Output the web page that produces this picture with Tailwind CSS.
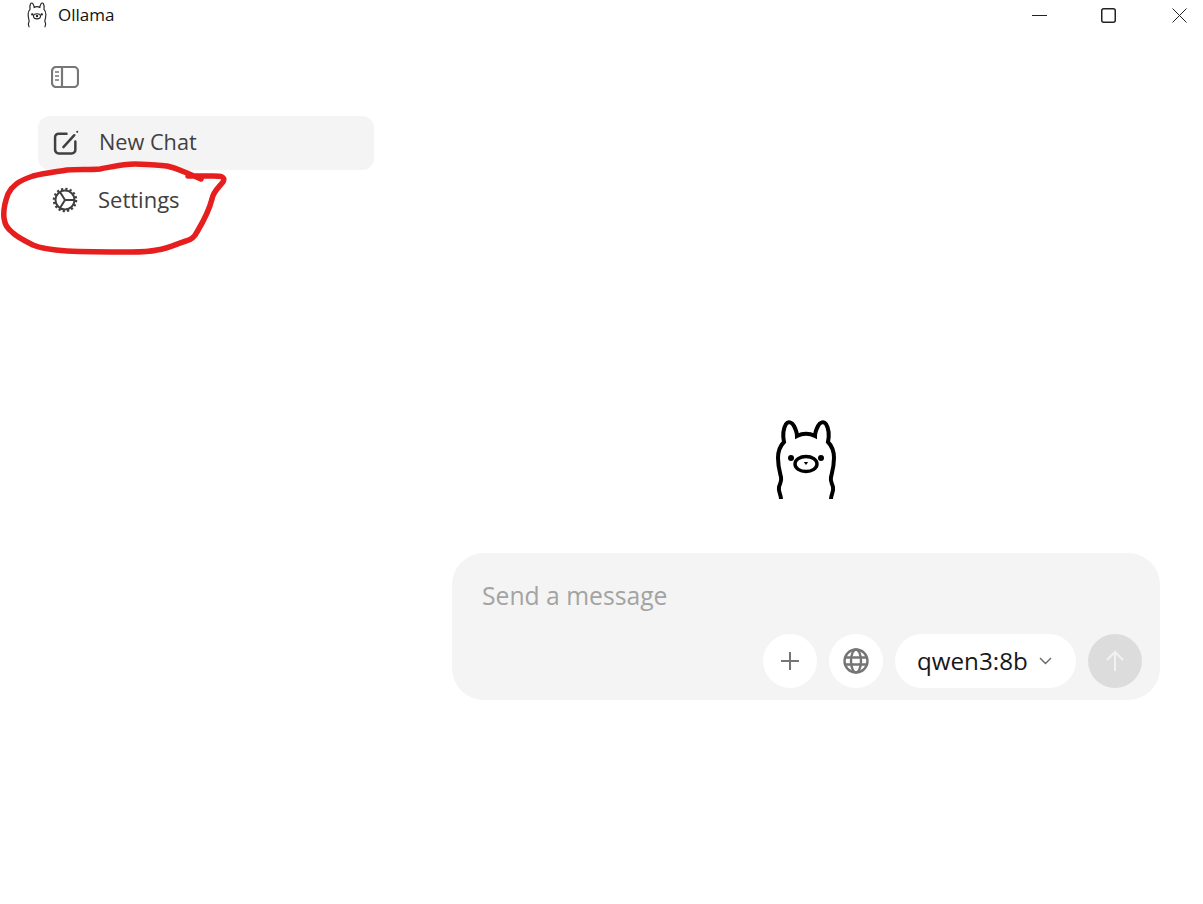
<!DOCTYPE html>
<html lang="en">
<head>
    <meta charset="UTF-8">
    <title>Ollama</title>
    <script src="https://cdn.jsdelivr.net/npm/@tailwindcss/browser@4"></script>
</head>
<body class="bg-white h-[904px] w-[1203px] overflow-hidden relative font-['Open_Sans',sans-serif]">
    <!-- title bar -->
    <header class="h-[32px] flex items-center">
        <svg class="ml-[26px] w-[22px] h-[26px] mt-[-3px]" viewBox="13 8 66 82" fill="none" stroke="#222" stroke-width="3.600">
            <path d="M21 88C21 83 18 81 19 76C20 72 22 71 21 66C20 62 18 56 18 47C18 39 20 35 24 31C23 26 23 18 26 13C28 10 32 11 34 15C36 19 37 22 37 25C43 22 49 22 55 25C55 22 56 19 58 15C60 11 64 10 66 13C69 18 69 26 68 31C72 35 74 39 74 47C74 56 72 62 71 66C70 71 72 72 73 76C74 81 71 83 71 88"/>
            <ellipse cx="46" cy="53" rx="11" ry="8"/>
            <circle cx="46" cy="52" r="2" fill="#222"/>
            <circle cx="31" cy="47" r="2" fill="#222"/>
            <circle cx="61" cy="47" r="2" fill="#222"/>
        </svg>
        <span class="ml-[10px] text-[17px] text-[#111] mt-[-2px]">Ollama</span>
        <div class="ml-auto flex items-center h-[32px] mt-[-2px]">
            <svg class="w-[15px] h-[15px] mr-[54px]" viewBox="0 0 15 15" stroke="#222" stroke-width="1"><path d="M0 7.500H15"/></svg>
            <svg class="w-[15px] h-[15px] mr-[56px]" viewBox="0 0 15 15" fill="none" stroke="#222" stroke-width="1.500"><rect x="0.750" y="0.750" width="13.500" height="13.500" rx="2"/></svg>
            <svg class="w-[15px] h-[15px] mr-[16px]" viewBox="0 0 15 15" stroke="#222" stroke-width="1"><path d="M0.500 0.500L14.500 14.500M14.500 0.500L0.500 14.500"/></svg>
        </div>
    </header>

    <div class="flex">
        <!-- sidebar -->
        <aside class="w-[452px] pl-[38px] shrink-0">
            <button class="ml-[13px] mt-[34px] block h-[21px]">
                <svg class="w-[28px] h-[22px] block" viewBox="0 0 28 22" fill="none" stroke="#777" stroke-width="2.200">
                    <rect x="1" y="1" width="26" height="20" rx="4"/>
                    <path d="M11 1V21"/>
                    <path d="M4 6H8M4 10H8M4 14H8" stroke-width="1.400"/>
                </svg>
            </button>
            <div class="mt-[29px] w-[336px] h-[54px] rounded-[12px] bg-[#f4f4f4] flex items-center text-[21.7px] text-[#404040]">
                <svg class="ml-[15px] w-[26px] h-[26px]" viewBox="0 0 25 25" fill="none" stroke="#404040" stroke-width="2.400" stroke-linecap="round">
                    <path d="M13 3.500H5.500A3.500 3.500 0 0 0 2 7V19A3.500 3.500 0 0 0 5.500 22.500H18A3.500 3.500 0 0 0 21.500 19V11"/>
                    <path d="M10 16.500L20.500 5"/>
                    <circle cx="23.300" cy="1.800" r="1" fill="#404040" stroke="none"/>
                </svg>
                <span class="ml-[20px] mt-[-1px]">New Chat</span>
            </div>
            <div class="mt-[3px] h-[54px] flex items-center text-[22px] text-[#404040]">
                <svg class="ml-[14px] w-[26px] h-[26px] mt-[-1px]" viewBox="0 0 26 26" fill="none" stroke="#404040" stroke-width="2">
                    <circle cx="13" cy="13" r="9.500"/>
                    <circle cx="13" cy="13" r="11" stroke-width="2.500" stroke-dasharray="2.200 2.120"/>
                    <path d="M13 13L22 13M13 13L8 5M13 13L8 21"/>
                </svg>
                <span class="ml-[20px] mt-[-2px]">Settings</span>
            </div>
        </aside>

        <!-- chat -->
        <main class="w-[708px] flex flex-col items-center">
            <svg class="mt-[379px] w-[90px] h-[100px] shrink-0 mr-[2px]" viewBox="0 0 90 100" fill="none" stroke="#000" stroke-width="4">
                <path d="M21 88C21 83 18 81 19 76C20 72 22 71 21 66C20 62 18 56 18 47C18 39 20 35 24 31C23 26 23 18 26 13C28 10 32 11 34 15C36 19 37 22 37 25C43 22 49 22 55 25C55 22 56 19 58 15C60 11 64 10 66 13C69 18 69 26 68 31C72 35 74 39 74 47C74 56 72 62 71 66C70 71 72 72 73 76C74 81 71 83 71 88"/>
                <ellipse cx="46" cy="53" rx="11" ry="7.500" stroke-width="3.400"/>
                <circle cx="31" cy="47" r="3" fill="#000" stroke="none"/>
                <circle cx="61" cy="47" r="3" fill="#000" stroke="none"/>
                <path d="M43.800 51H48.200L46 54Z" fill="#000" stroke="none"/>
            </svg>
            <div class="mt-[42px] w-full h-[147px] rounded-[32px] bg-[#f4f4f4] flex flex-col">
                <p class="pl-[30px] pt-[25px] text-[24.7px] leading-[36px] text-[#a3a3a3]">Send a message</p>
                <div class="mt-auto pb-[12px] pr-[18px] flex justify-end gap-[12px]">
                    <button class="w-[54px] h-[54px] rounded-full bg-white flex items-center justify-center">
                        <svg class="w-[20px] h-[20px]" viewBox="0 0 20 20" stroke="#757575" stroke-width="2"><path d="M10 1V19M1 10H19"/></svg>
                    </button>
                    <button class="w-[54px] h-[54px] rounded-full bg-white flex items-center justify-center">
                        <svg class="w-[26px] h-[26px]" viewBox="0 0 26 26" fill="none" stroke="#757575" stroke-width="2.400">
                            <circle cx="13" cy="13" r="11.500"/>
                            <ellipse cx="13" cy="13" rx="5" ry="11.500"/>
                            <path d="M2 9.500H24M2 16.500H24"/>
                        </svg>
                    </button>
                    <button class="w-[181px] h-[54px] rounded-full bg-white flex items-center pl-[22px] text-[24.2px] text-[#171717]">
                        qwen3:8b
                        <svg class="ml-[11px] w-[13px] h-[8px]" viewBox="0 0 13 8" fill="none" stroke="#666" stroke-width="1.400"><path d="M1 1L6.500 6.500L12 1"/></svg>
                    </button>
                    <button class="w-[54px] h-[54px] rounded-full bg-[#dcdcdc] flex items-center justify-center">
                        <svg class="w-[20px] h-[22px]" viewBox="0 0 20 22" fill="none" stroke="#f2f2f2" stroke-width="2"><path d="M10 21V2M2 10L10 2L18 10"/></svg>
                    </button>
                </div>
            </div>
        </main>
    </div>

    <!-- hand drawn red mark over the sidebar -->
    <svg class="absolute left-0 top-0 pointer-events-none" width="240" height="265" fill="none" stroke="#e61e1e" stroke-width="5.500" stroke-linecap="round" stroke-linejoin="round">
        <path d="M188 176C193 176 205 176 213 176C220 176 226 176 223 182C218 188 213 192 212 199C209 211 203 222 197 232C194 238 191 240 186 241C176 244 170 248 157 250C148 252 140 252 131 252C110 252 88 252 67 251C52 250 42 249 33 245C23 240 17 237 13 233C7 228 5 225 4 218C3 210 5 202 8 194C12 186 18 181 33 176C45 173 55 172 67 170C80 169 88 170 100 169C112 167 122 164 135 164C146 164 156 165 167 166C176 168 182 171 187 173C191 175 197 177 201 179"/>
    </svg>
</body>
</html>
